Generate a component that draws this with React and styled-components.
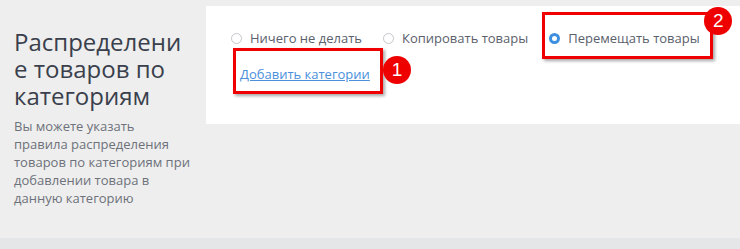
import styled, { createGlobalStyle } from 'styled-components';

const GlobalStyle = createGlobalStyle`
  html, body {
    margin: 0;
    padding: 0;
    background: #eeeeee;
  }

  body {
    font-family: 'Open Sans', 'Noto Sans', sans-serif;
  }
`;

const Page = styled.div`
  display: flex;
  flex-direction: column;
  width: 740px;
  height: 249px;
  overflow: hidden;
`;

const Section = styled.div`
  display: flex;
  align-items: flex-start;
  height: 238px;
  padding-top: 6px;
  box-sizing: border-box;
`;

const Aside = styled.div`
  width: 176px;
  padding: 22px 16px 0 14px;
  flex-shrink: 0;
`;

const Title = styled.h2`
  margin: 0 0 8px;
  font-size: 24px;
  font-weight: 400;
  line-height: 27px;
  color: #3a3f4c;
  overflow-wrap: anywhere;
`;

const Hint = styled.p`
  margin: 0;
  font-size: 13px;
  line-height: 18px;
  color: #6d717a;
`;

const Panel = styled.div`
  flex: 1;
  height: 118px;
  background: #fff;
  padding: 23px 0 0 25px;
  box-sizing: border-box;
`;

const Options = styled.div`
  display: flex;
  align-items: center;
  gap: 21px;
  height: 18px;
`;

const Option = styled.label`
  position: relative;
  display: flex;
  align-items: center;
  gap: 8px;
  font-size: 13px;
  color: #5a606c;
  cursor: pointer;
`;

const Radio = styled.span`
  width: 11px;
  height: 11px;
  border-radius: 50%;
  box-sizing: border-box;
  border: ${(p) => (p.$checked ? '3.5px solid #3d8fe0' : '1px solid #c4c6ca')};
  background: #fff;
`;

const LinkRow = styled.div`
  position: relative;
  display: inline-block;
  margin: 15px 0 0 9px;
`;

const Link = styled.a`
  font-size: 13px;
  color: #4a90dc;
  text-decoration: underline;
  cursor: pointer;
`;

const Highlight = styled.span`
  position: absolute;
  top: ${(p) => p.$top}px;
  left: ${(p) => p.$left}px;
  right: ${(p) => p.$right}px;
  bottom: ${(p) => p.$bottom}px;
  border: 3px solid #f00000;
  box-shadow: 2px 2px 3px rgba(0, 0, 0, 0.35);
  pointer-events: none;
`;

const Badge = styled.span`
  position: absolute;
  top: ${(p) => p.$top}px;
  left: ${(p) => p.$left}px;
  width: 28px;
  height: 28px;
  border-radius: 50%;
  background: #ee0000;
  color: #fff;
  font-family: 'Liberation Sans', Arial, sans-serif;
  font-size: 19px;
  line-height: 28px;
  text-align: center;
`;

const Footer = styled.div`
  flex: 1;
  background: #e5e6e8;
`;

const options = [
  { label: 'Ничего не делать' },
  { label: 'Копировать товары' },
  { label: 'Перемещать товары', checked: true },
];

const App = () => {
  return (
    <Page>
      <GlobalStyle />
      <Section>
        <Aside>
          <Title>Распределение товаров по категориям</Title>
          <Hint>
            Вы можете указать правила распределения товаров по категориям при
            добавлении товара в данную категорию
          </Hint>
        </Aside>

        <Panel>
          <Options>
            {options.map((o) => (
              <Option key={o.label}>
                <Radio $checked={o.checked} />
                {o.label}
                {o.checked && (
                  <>
                    <Highlight $top={-17} $left={-7} $right={-13} $bottom={-12} />
                    <Badge $top={-22} $left={155}>2</Badge>
                  </>
                )}
              </Option>
            ))}
          </Options>

          <LinkRow>
            <Link>Добавить категории</Link>
            <Highlight $top={-14} $left={-7} $right={-13} $bottom={-10} />
            <Badge $top={-6} $left={143}>1</Badge>
          </LinkRow>
        </Panel>
      </Section>
      <Footer />
    </Page>
  );
};

export default App;
